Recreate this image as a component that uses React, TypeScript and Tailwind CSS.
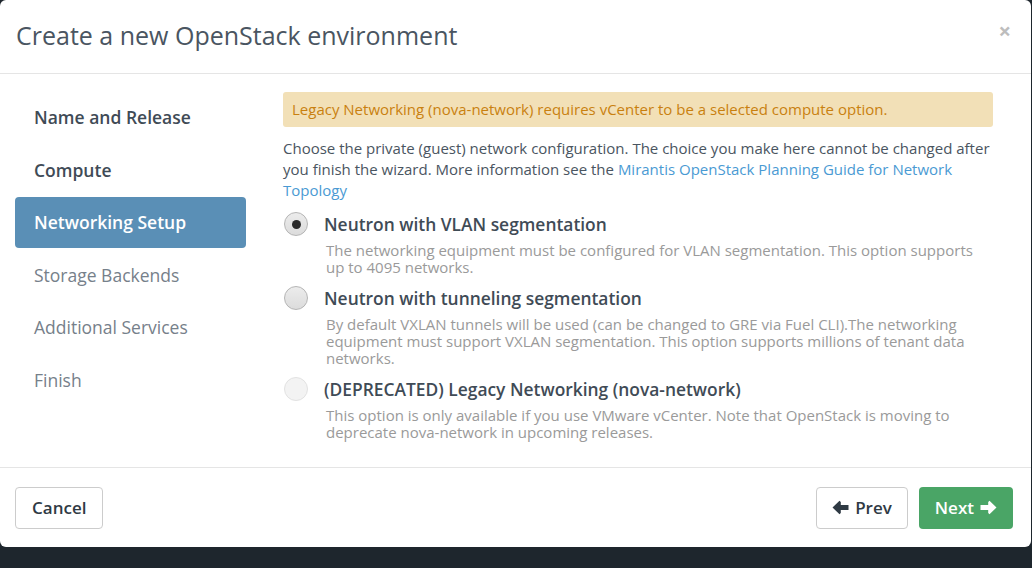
import React from 'react'

const steps = [
  { label: 'Name and Release', state: 'done' },
  { label: 'Compute', state: 'done' },
  { label: 'Networking Setup', state: 'active' },
  { label: 'Storage Backends', state: 'todo' },
  { label: 'Additional Services', state: 'todo' },
  { label: 'Finish', state: 'todo' },
]

const options = [
  {
    label: 'Neutron with VLAN segmentation',
    desc: 'The networking equipment must be configured for VLAN segmentation. This option supports up to 4095 networks.',
    checked: true,
    disabled: false,
  },
  {
    label: 'Neutron with tunneling segmentation',
    desc: 'By default VXLAN tunnels will be used (can be changed to GRE via Fuel CLI).The networking equipment must support VXLAN segmentation. This option supports millions of tenant data networks.',
    checked: false,
    disabled: false,
  },
  {
    label: '(DEPRECATED) Legacy Networking (nova-network)',
    desc: 'This option is only available if you use VMware vCenter. Note that OpenStack is moving to deprecate nova-network in upcoming releases.',
    checked: false,
    disabled: true,
  },
]

function Arrow({ dir }: { dir: 'left' | 'right' }) {
  return (
    <svg width="17" height="15" viewBox="0 0 17 15" className={dir === 'left' ? '' : 'rotate-180'}>
      <path d="M0.5 7.5 L7.5 0.8 L8.8 2.1 L8.8 5 L16.5 5 L16.5 10 L8.8 10 L8.8 12.9 L7.5 14.2 Z" fill="currentColor" />
    </svg>
  )
}

function Radio({ checked, disabled }: { checked: boolean; disabled: boolean }) {
  return (
    <span
      className={
        'flex h-[24px] w-[24px] shrink-0 items-center justify-center rounded-full border ' +
        (disabled
          ? 'border-[#e2e2e2] bg-[#f3f3f3]'
          : 'border-[#b5b5b5] bg-gradient-to-b from-[#ececec] to-[#dcdcdc]')
      }
    >
      {checked && <span className="h-[9px] w-[9px] rounded-full bg-[#2b2b2b]" />}
    </span>
  )
}

export default function App() {
  return (
    <div className="h-[568px] w-[1032px] bg-[#1e262d] font-['Open_Sans',sans-serif]">
      <div className="flex h-[547px] w-[1031px] flex-col rounded-md bg-white">
        <div className="flex h-[74px] items-center justify-between border-b border-[#e5e5e5] pl-[16px] pr-[20px]">
          <h4 className="pb-[1px] text-[25px] text-[#4a5561]">Create a new OpenStack environment</h4>
          <span className="-mt-[14px] text-[22px] font-bold leading-none text-[#bdbdbd]">×</span>
        </div>

        <div className="flex h-[394px] border-b border-[#e5e5e5] pl-[15px] pr-[38px] pt-[18px]">
          <div className="flex w-[231px] flex-col gap-[1.5px]">
            {steps.map((s) => (
              <div
                key={s.label}
                className={
                  'flex h-[51px] items-center rounded-[4px] pl-[19px] text-[17.5px] ' +
                  (s.state === 'active'
                    ? 'bg-[#5a8fb6] font-semibold text-white'
                    : s.state === 'done'
                      ? 'font-semibold text-[#3f4b56]'
                      : 'text-[#76808a]')
                }
              >
                {s.label}
              </div>
            ))}
          </div>

          <div className="ml-[37px] flex-1">
            <div className="rounded-[3px] bg-[#f2e0b7] px-[9px] py-[7px] text-[15px] leading-[21px] text-[#c9800f]">
              Legacy Networking (nova-network) requires vCenter to be a selected compute option.
            </div>
            <p className="mt-[11px] text-[15px] leading-[21px] text-[#4a5561]">
              Choose the private (guest) network configuration. The choice you make here cannot be changed after you finish the wizard. More information see the{' '}
              <span className="text-[#4a9ad3]">Mirantis OpenStack Planning Guide for Network Topology</span>
            </p>

            <div className="mt-[8px] flex flex-col gap-[7px]">
              {options.map((o) => (
                <div key={o.label}>
                  <div className="flex items-center gap-[16px] pl-[1px]">
                    <Radio checked={o.checked} disabled={o.disabled} />
                    <span className="text-[17.4px] font-semibold leading-[30px] text-[#3f4b56]">{o.label}</span>
                  </div>
                  <p className="mt-[3px] pl-[43px] pr-[10px] text-[15px] leading-[17px] text-[#9a9a9a]">{o.desc}</p>
                </div>
              ))}
            </div>
          </div>
        </div>

        <div className="flex flex-1 items-center justify-between px-[15px]">
          <button className="h-[42px] rounded-[4px] border border-[#cccccc] px-[16px] text-[17px] font-semibold text-[#2f3a44]">
            Cancel
          </button>
          <div className="flex gap-[11px] pr-[3px]">
            <button className="flex h-[42px] items-center gap-[6px] rounded-[4px] border border-[#cccccc] px-[15px] text-[17px] font-semibold text-[#2f3a44]">
              <Arrow dir="left" />
              Prev
            </button>
            <button className="flex h-[42px] items-center gap-[6px] rounded-[4px] bg-[#4aa566] px-[16px] text-[17px] font-semibold text-white">
              Next
              <Arrow dir="right" />
            </button>
          </div>
        </div>
      </div>
    </div>
  )
}
